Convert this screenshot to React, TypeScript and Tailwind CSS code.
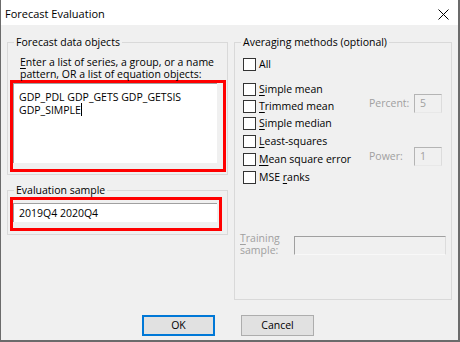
import React from 'react'

const ui = "font-['Open_Sans',sans-serif] text-[10.5px] text-black"

function Acc({ pre = '', acc, post }: { pre?: string; acc: string; post: string }) {
  return (
    <span>
      {pre}
      <span className="underline underline-offset-[2px] decoration-1">{acc}</span>
      {post}
    </span>
  )
}

function Box() {
  return <div className="w-[13px] h-[13px] shrink-0 bg-white border border-[#333333]" />
}

function DisabledField({ label, value }: { label: string; value: string }) {
  return (
    <div className="ml-auto mr-[4px] mt-[-6px] flex items-center">
      <span className="w-[45px] text-[#a0a0a0] leading-[15px]">{label}</span>
      <div className="w-[28px] h-[19px] flex items-center pl-[5px] border-t border-l border-[#b4b4b4] border-r border-b border-r-[#dcdcdc] border-b-[#e8e8e8] text-[#a0a0a0] leading-[15px]">
        {value}
      </div>
    </div>
  )
}

const rows = [
  { h: 'h-[17px]', pre: '', acc: 'S', post: 'imple mean' },
  { h: 'h-[17px]', pre: '', acc: 'T', post: 'rimmed mean', field: 'Percent:', value: '5' },
  { h: 'h-[18px]', pre: '', acc: 'S', post: 'imple median' },
  { h: 'h-[18px]', pre: '', acc: 'L', post: 'east-squares' },
  { h: 'h-[18px]', pre: '', acc: 'M', post: 'ean square error', field: 'Power:', value: '1' },
  { h: 'h-[13px]', pre: 'MSE ', acc: 'r', post: 'anks' },
]

export default function App() {
  return (
    <div className={`w-[460px] h-[342px] flex flex-col bg-[#f0f0f0] border-l border-r-2 border-b-2 border-[#6b6b6b] ${ui}`}>
      {/* Title bar */}
      <div className="h-[25px] shrink-0 bg-white flex items-start pt-[6px] pl-[4px] text-[11px]">
        <span className="leading-[15px]">Forecast Evaluation</span>
        <svg className="ml-auto mr-[9px] mt-[3px]" width="11" height="11" viewBox="0 0 11 11">
          <path d="M0.5 0.5 L10.5 10.5 M10.5 0.5 L0.5 10.5" stroke="#000" strokeWidth="1" fill="none" />
        </svg>
      </div>

      {/* Body */}
      <div className="flex-1 flex flex-col pt-[10px]">
        <div className="flex items-start pl-[6px] gap-[6px]">
          {/* Left column */}
          <div className="flex flex-col">
            <fieldset className="w-[221px] h-[140px] border border-[#d9d9d9] pl-[2px]">
              <legend className="ml-[4px] px-[2px] leading-[15px]">Forecast data objects</legend>
              <div className="mt-[6px] h-[24px] pl-[10px] leading-[12px]">
                <Acc acc="E" post="nter a list of series, a group, or a name" />
                <br />
                pattern, OR a list of equation objects:
              </div>
              <div className="w-[216px] h-[92px] border-[3px] border-[#ff0000]">
                <div className="w-[204px] h-[80px] bg-white border-t border-l border-[#a0a0a0] pt-[7px] pl-[5px] leading-[12px]">
                  GDP_PDL GDP_GETS GDP_GETSIS
                  <br />
                  GDP_SIMPLE
                  <span className="inline-block w-[1px] h-[13px] bg-black align-[-2px]" />
                </div>
              </div>
            </fieldset>

            <fieldset className="mt-[8px] w-[221px] h-[52px] border border-[#d9d9d9] pl-[2px]">
              <legend className="ml-[4px] px-[2px] leading-[15px]">Evaluation sample</legend>
              <div className="mt-[-1px] w-[212px] h-[34px] border-[3px] border-[#ff0000]">
                <div className="mt-[3px] w-[204px] h-[19px] bg-white border-t border-l border-[#a0a0a0] flex items-center pl-[5px] leading-[15px]">
                  2019Q4 2020Q4
                </div>
              </div>
            </fieldset>
          </div>

          {/* Right column */}
          <fieldset className="w-[218px] h-[265px] border border-[#d9d9d9] pl-[5px] pr-[5px]">
            <legend className="ml-[1px] px-[2px] leading-[15px]">Averaging methods (optional)</legend>
            <div className="mt-[8px] h-[13px] pl-[3px] flex items-center">
              <Box />
              <span className="ml-[3px] leading-[15px]">All</span>
            </div>
            <div className="mt-[12px] flex flex-col">
              {rows.map((r, i) => (
                <div key={i} className={`${r.h} pl-[3px] flex items-start`}>
                  <div className="h-[13px] flex items-center">
                    <Box />
                    <span className="ml-[3px] leading-[15px]">
                      <Acc pre={r.pre} acc={r.acc} post={r.post} />
                    </span>
                  </div>
                  {r.field && <DisabledField label={r.field} value={r.value!} />}
                </div>
              ))}
            </div>
            <div className="mt-[48px] flex items-start">
              <div className="leading-[12px] text-[#a0a0a0]">
                <Acc acc="T" post="raining" />
                <br />
                sample:
              </div>
              <div className="ml-auto mt-[4px] w-[152px] h-[19px] border-t border-l border-[#a0a0a0] border-r border-b border-r-[#dcdcdc] border-b-[#f8f8f8]" />
            </div>
          </fieldset>
        </div>

        {/* Buttons */}
        <div className="mt-[15px] pl-[141px] flex">
          <button className="w-[73px] h-[21px] bg-[#e1e1e1] border-2 border-[#0078d7] leading-[15px]">OK</button>
          <button className="ml-[26px] w-[73px] h-[21px] bg-[#e1e1e1] border border-[#adadad] leading-[15px]">Cancel</button>
        </div>
      </div>
    </div>
  )
}
